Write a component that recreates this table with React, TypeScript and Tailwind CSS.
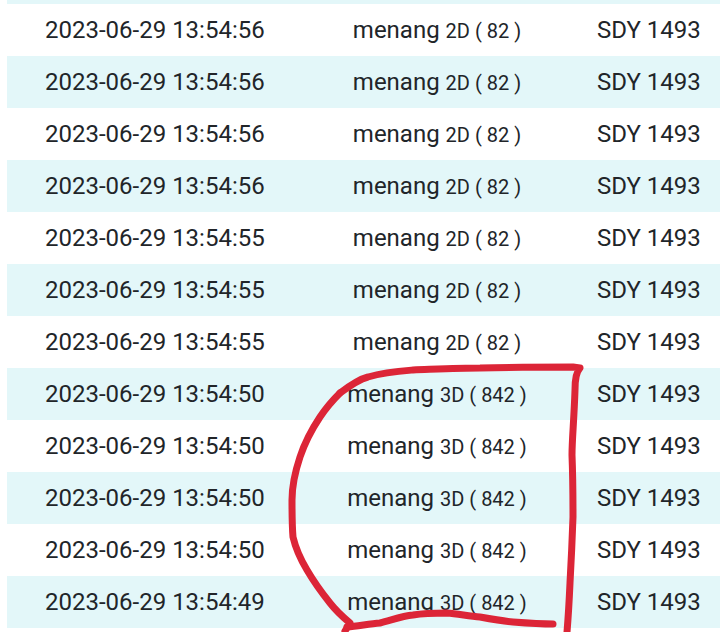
import React from 'react';

type Row = {
  time: string;
  game: string;
  number: string;
  market: string;
};

const rows: Row[] = [
  { time: '2023-06-29 13:54:56', game: '2D', number: '82', market: 'SDY 1493' },
  { time: '2023-06-29 13:54:56', game: '2D', number: '82', market: 'SDY 1493' },
  { time: '2023-06-29 13:54:56', game: '2D', number: '82', market: 'SDY 1493' },
  { time: '2023-06-29 13:54:56', game: '2D', number: '82', market: 'SDY 1493' },
  { time: '2023-06-29 13:54:55', game: '2D', number: '82', market: 'SDY 1493' },
  { time: '2023-06-29 13:54:55', game: '2D', number: '82', market: 'SDY 1493' },
  { time: '2023-06-29 13:54:55', game: '2D', number: '82', market: 'SDY 1493' },
  { time: '2023-06-29 13:54:50', game: '3D', number: '842', market: 'SDY 1493' },
  { time: '2023-06-29 13:54:50', game: '3D', number: '842', market: 'SDY 1493' },
  { time: '2023-06-29 13:54:50', game: '3D', number: '842', market: 'SDY 1493' },
  { time: '2023-06-29 13:54:50', game: '3D', number: '842', market: 'SDY 1493' },
  { time: '2023-06-29 13:54:49', game: '3D', number: '842', market: 'SDY 1493' },
];

export default function App() {
  return (
    <div className="relative h-[632px] w-[720px] overflow-hidden bg-white font-['Roboto',sans-serif] text-[#212529]">
      {/* win history table, previous row scrolled out of view */}
      <div className="pl-[7px]">
        <div className="h-[4px] bg-[#e3f7f9]" />
        {rows.map((row, i) => (
          <div
            key={i}
            className={`grid h-[52px] grid-cols-[270px_320px_1fr] items-center ${
              i % 2 === 1 ? 'bg-[#e3f7f9]' : 'bg-white'
            }`}
          >
            <div className="pl-[38px] text-[24px] leading-none">{row.time}</div>
            <div className="text-center leading-none">
              <span className="text-[24px]">menang </span>
              <span className="text-[20px]">
                {row.game} ( {row.number} )
              </span>
            </div>
            <div className="text-[24px] leading-none">{row.market}</div>
          </div>
        ))}
      </div>

      {/* red hand-drawn marker loop */}
      <svg
        className="pointer-events-none absolute left-0 top-0"
        width="720"
        height="632"
        viewBox="0 0 720 632"
      >
        <g fill="none" stroke="#dc2537" strokeWidth="7" strokeLinecap="round" strokeLinejoin="round">
          <path d="M340 393 C352 384 360 379 368 377 C385 372 400 371 413 370 C440 369 460 368 480 368 C515 367 545 367 573 367 L580 368 C576 372 575 380 575 390 C574 420 572 440 572 455 C573 480 573 500 573 517 C572 545 571 565 570 583 C569 605 568 620 567 632" />
          <path d="M340 393 C333 400 326 408 320 417 C310 432 304 445 300 457 C295 472 292 487 292 500 C292 513 292 525 293 537 C296 550 301 560 307 570 C314 582 322 593 330 603 C337 612 344 618 350 623 L345 631" />
          <path d="M347 627 C358 626 369 624 380 623 C392 620 402 616 413 615 C425 613 436 613 447 613 C458 614 469 616 480 617 C491 619 502 621 513 622 C526 623 540 624 553 624" />
        </g>
      </svg>
    </div>
  );
}
